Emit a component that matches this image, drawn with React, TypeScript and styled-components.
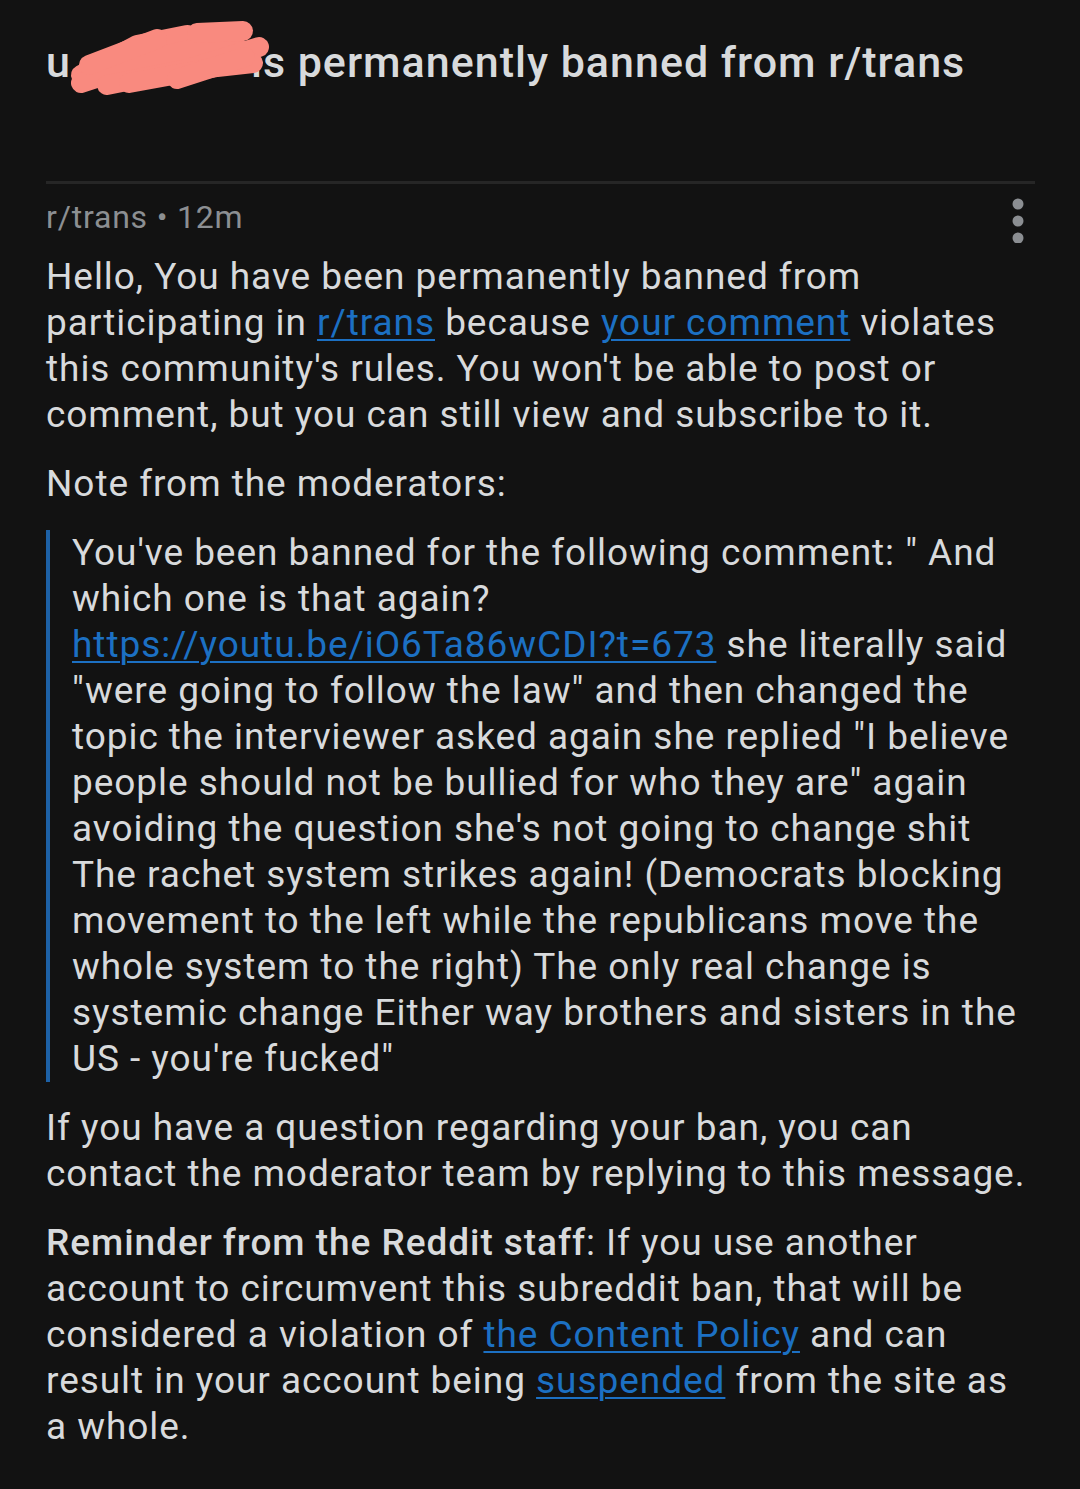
import styled, { createGlobalStyle } from 'styled-components'

const GlobalStyle = createGlobalStyle`
  html, body {
    margin: 0;
    padding: 0;
    background: #121212;
  }
  body {
    font-family: Roboto, 'Noto Sans', sans-serif;
    color: #d8dadc;
    -webkit-font-smoothing: antialiased;
  }
`

const Page = styled.main`
  width: 1080px;
  min-height: 1489px;
  box-sizing: border-box;
  padding: 0 45px 0 46px;
  background: #121212;
`

const Title = styled.h1`
  margin: 0;
  padding-top: 32px;
  font-size: 43px;
  line-height: 60px;
  font-weight: 500;
  letter-spacing: 1px;
  color: #d8dadc;
  white-space: nowrap;
`

/* scribble that hides the username */
const Redacted = styled.span`
  display: inline-block;
  position: relative;
  width: 180px;
  height: 1em;
  vertical-align: middle;

  & > svg {
    position: absolute;
    left: -4px;
    top: -27px;
  }
`

const Divider = styled.hr`
  margin: 89px 0 0;
  border: none;
  height: 3px;
  background: #262626;
`

const MetaRow = styled.div`
  display: flex;
  justify-content: space-between;
  align-items: flex-start;
  margin-top: 13px;
`

const Meta = styled.span`
  font-size: 32px;
  line-height: 40px;
  letter-spacing: 0.8px;
  color: #8c8f92;
`

const MenuButton = styled.button`
  border: none;
  background: none;
  padding: 0;
  margin-right: 7px;
  width: 20px;
  height: 46px;
  display: flex;
  cursor: pointer;
`

const Body = styled.div`
  display: flex;
  flex-direction: column;
  gap: 23px;
  margin-top: 11px;
`

const Paragraph = styled.p`
  margin: 0;
  font-size: 37px;
  line-height: 46px;
  letter-spacing: 0.95px;
  white-space: nowrap;
`

const Quote = styled.blockquote`
  margin: 0;
  padding-left: 22px;
  border-left: 4px solid #1d61a6;
  font-size: 37px;
  line-height: 46px;
  letter-spacing: 0.95px;
  white-space: nowrap;
`

const Link = styled.a`
  color: #1c70c3;
  text-decoration: underline;
  text-decoration-thickness: 2px;
  text-underline-offset: 4px;
`

const Strong = styled.strong`
  font-weight: 500;
`

const Scribble = () => (
  <svg width="205" height="78" viewBox="0 0 205 78">
    <g stroke="#f98a7f" strokeWidth="20" strokeLinecap="round" strokeLinejoin="round" fill="none">
      <path d="M14 58 L70 28 L120 18 L128 30" />
      <path d="M14 66 L100 38 L160 24 L172 32" />
      <path d="M40 68 L120 52 L192 30" />
      <path d="M62 66 L150 50 L186 46" />
      <path d="M22 48 L90 22" />
      <path d="M110 62 L178 40" />
      <path d="M130 16 L176 14" />
    </g>
  </svg>
)

const Dots = () => (
  <svg width="20" height="46" viewBox="0 0 20 46">
    <g fill="#8b8e92">
      <circle cx="10" cy="7" r="5.5" />
      <circle cx="10" cy="24" r="5.5" />
      <circle cx="10" cy="41" r="5.5" />
    </g>
  </svg>
)

export default function App() {
  return (
    <>
      <GlobalStyle />
      <Page>
        <Title>
          u
          <Redacted>
            <Scribble />
          </Redacted>
          is permanently banned from r/trans
        </Title>
        <Divider />
        <MetaRow>
          <Meta>r/trans • 12m</Meta>
          <MenuButton aria-label="More options">
            <Dots />
          </MenuButton>
        </MetaRow>
        <Body>
          <Paragraph>
            Hello, You have been permanently banned from
            <br />
            participating in <Link>r/trans</Link> because <Link>your comment</Link> violates
            <br />
            this community's rules. You won't be able to post or
            <br />
            comment, but you can still view and subscribe to it.
          </Paragraph>
          <Paragraph>Note from the moderators:</Paragraph>
          <Quote>
            You've been banned for the following comment: " And
            <br />
            which one is that again?
            <br />
            <Link>https://youtu.be/iO6Ta86wCDI?t=673</Link> she literally said
            <br />
            "were going to follow the law" and then changed the
            <br />
            topic the interviewer asked again she replied "I believe
            <br />
            people should not be bullied for who they are" again
            <br />
            avoiding the question she's not going to change shit
            <br />
            The rachet system strikes again! (Democrats blocking
            <br />
            movement to the left while the republicans move the
            <br />
            whole system to the right) The only real change is
            <br />
            systemic change Either way brothers and sisters in the
            <br />
            US - you're fucked"
          </Quote>
          <Paragraph>
            If you have a question regarding your ban, you can
            <br />
            contact the moderator team by replying to this message.
          </Paragraph>
          <Paragraph>
            <Strong>Reminder from the Reddit staff</Strong>: If you use another
            <br />
            account to circumvent this subreddit ban, that will be
            <br />
            considered a violation of <Link>the Content Policy</Link> and can
            <br />
            result in your account being <Link>suspended</Link> from the site as
            <br />a whole.
          </Paragraph>
        </Body>
      </Page>
    </>
  )
}
